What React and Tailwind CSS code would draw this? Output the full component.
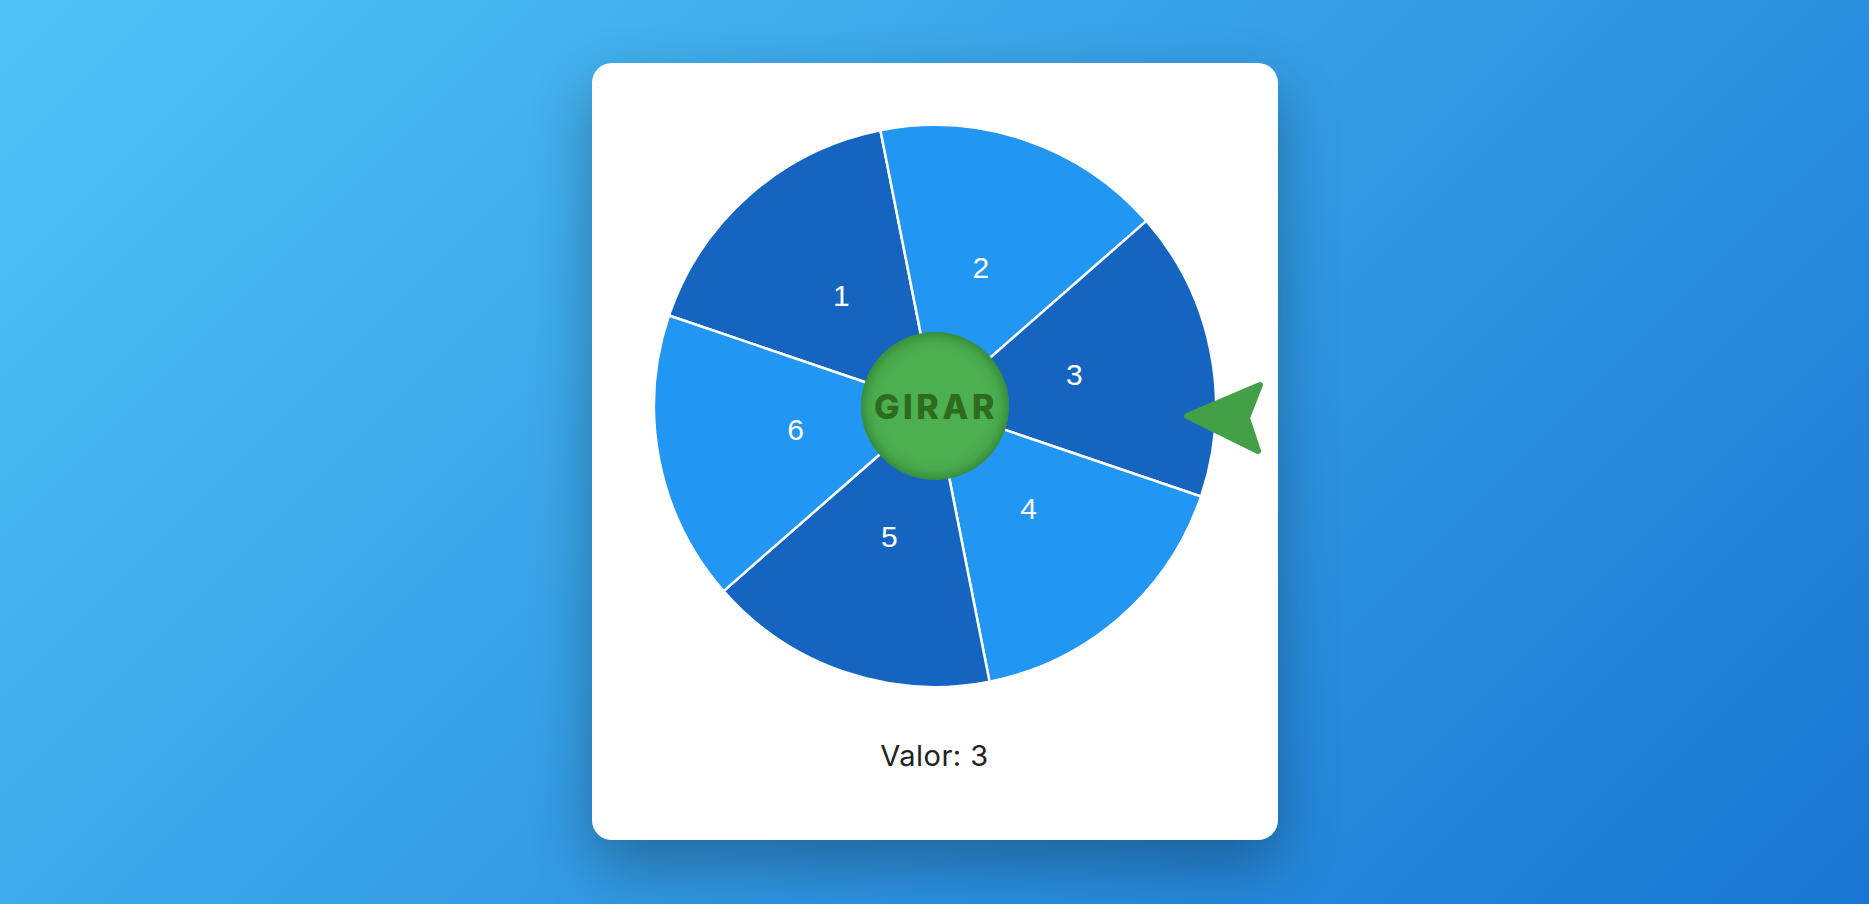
import React from "react";

const R = 281;
const C = 311;
const START = -161.2;

const sectors = [1, 2, 3, 4, 5, 6].map((n, i) => {
  const a0 = ((START + i * 60) * Math.PI) / 180;
  const a1 = ((START + (i + 1) * 60) * Math.PI) / 180;
  const mid = (a0 + a1) / 2;
  return {
    n,
    fill: i % 2 === 0 ? "#1565c0" : "#2196f3",
    d: `M ${C} ${C} L ${C + R * Math.cos(a0)} ${C + R * Math.sin(a0)} A ${R} ${R} 0 0 1 ${C + R * Math.cos(a1)} ${C + R * Math.sin(a1)} Z`,
    lx: C + 142 * Math.cos(mid),
    ly: C + 142 * Math.sin(mid) - 4,
  };
});

const Wheel = () => (
  <div className="relative w-[622px] h-[622px]">
    <svg width="622" height="622" viewBox="0 0 622 622" className="overflow-visible">
      {sectors.map((s) => (
        <g key={s.n}>
          <path d={s.d} fill={s.fill} stroke="#ffffff" strokeWidth="2.5" strokeLinejoin="round" />
          <text
            x={s.lx}
            y={s.ly}
            fill="#ffffff"
            fontSize="30"
            fontFamily="'Liberation Sans', Arial, sans-serif"
            textAnchor="middle"
            dominantBaseline="central"
          >
            {s.n}
          </text>
        </g>
      ))}
      {/* puntero */}
      <polygon
        points="563,321 636,290 623,323 634,356"
        fill="#43a047"
        stroke="#43a047"
        strokeWidth="6"
        strokeLinejoin="round"
      />
    </svg>
    <button className="absolute left-[237px] top-[237px] w-[148px] h-[148px] rounded-full bg-[#4caf50] shadow-[inset_0_0_16px_rgba(27,94,32,0.8)] flex items-center justify-center">
      <span className="text-[34px] font-extrabold tracking-[3.5px] text-[#2e6b1f] pl-[3px] font-['Inter',sans-serif]">
        GIRAR
      </span>
    </button>
  </div>
);

export default function App() {
  return (
    <div className="min-h-screen w-full bg-[linear-gradient(135deg,#4fc3f7,#1976d2)] flex items-center justify-center">
      <div className="w-[686px] h-[777px] mb-[1px] bg-white rounded-[20px] pt-[32px] px-[32px] flex flex-col items-center shadow-[0_25px_60px_rgba(0,0,0,0.3)]">
        <Wheel />
        <p className="mt-[18px] text-[29px] leading-[42px] tracking-[0.5px] text-[#222222] font-['Inter',sans-serif]">
          Valor: 3
        </p>
      </div>
    </div>
  );
}
